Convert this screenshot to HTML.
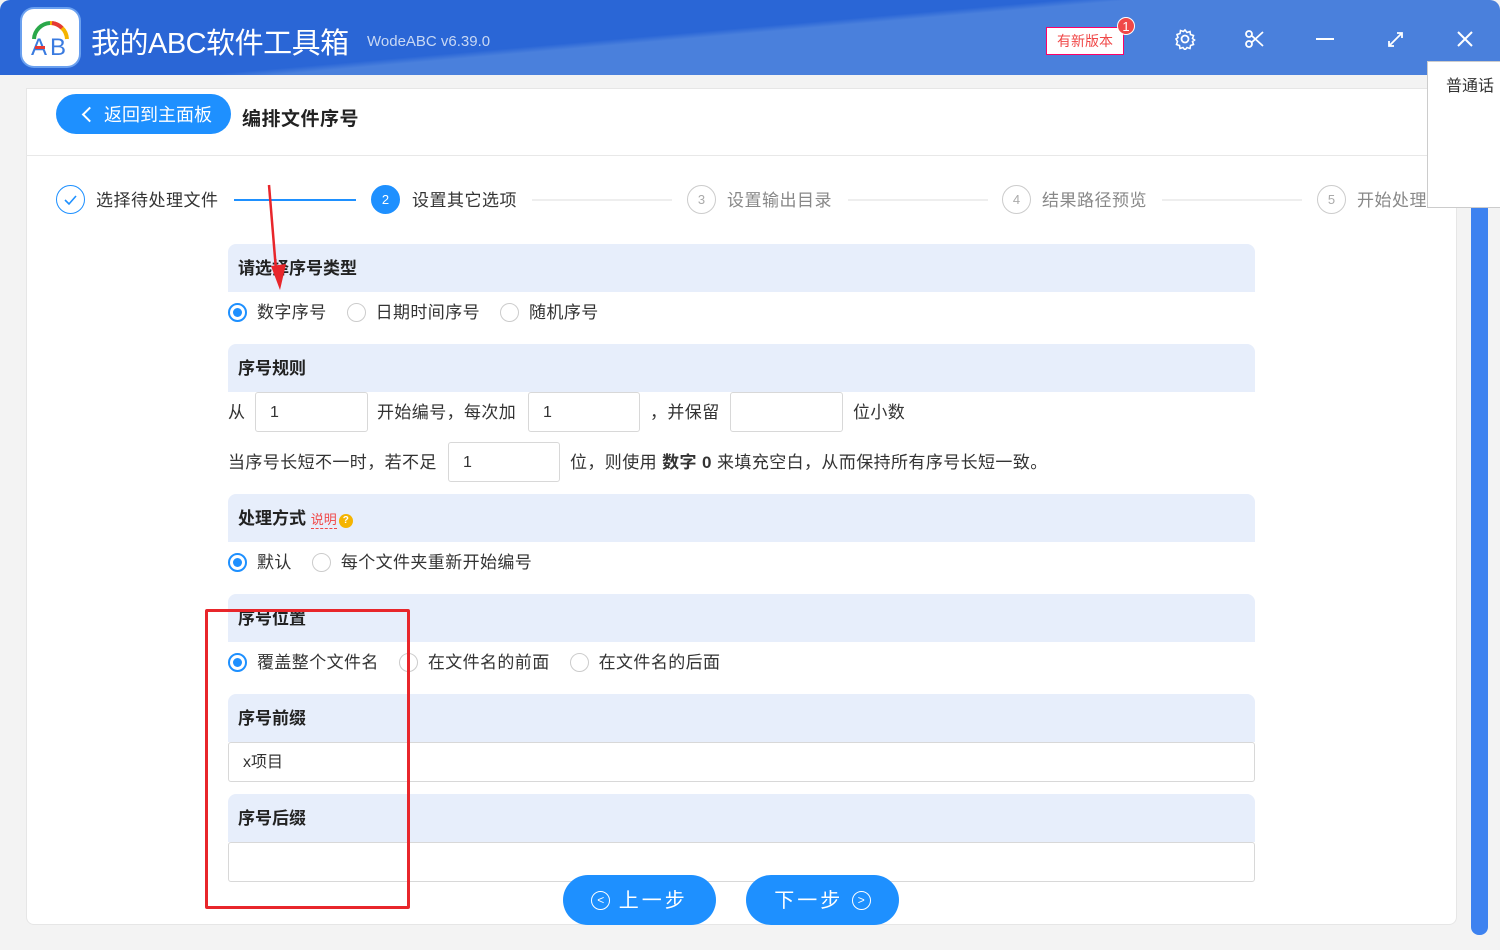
<!DOCTYPE html>
<html><head><meta charset="utf-8"><style>
*{box-sizing:border-box;margin:0;padding:0}
body{width:1500px;height:950px;overflow:hidden;background:#f3f3f3;font-family:"Liberation Sans","Noto Sans CJK SC",sans-serif;position:relative;color:#333}
.title{position:absolute;left:0;top:0;width:1500px;height:75px;background:linear-gradient(175deg,#2a66d6 0%,#2a66d6 45%,#4a80dc 48%,#4a80dc 100%);border-radius:10px 10px 0 0}
.logo{position:absolute;left:22px;top:9px;width:57px;height:57px;border-radius:12px;background:#fff;box-shadow:0 0 0 2px #6aa0ef}
.t1{position:absolute;left:91px;top:20px;color:#fff;font-size:29px;letter-spacing:-0.5px}
.t2{position:absolute;left:367px;top:33px;color:#c8d8f4;font-size:15px}
.nv{position:absolute;left:1046px;top:27px;width:78px;height:28px;border:1px solid #f06;background:#fff;color:#f04848;font-size:14px;text-align:center;line-height:26px}
.badge{position:absolute;left:1117px;top:17px;width:18px;height:18px;border-radius:50%;background:#f04848;color:#fff;font-size:13px;text-align:center;line-height:18px;border:1px solid #fff}
.panel{position:absolute;left:26px;top:88px;width:1431px;height:837px;background:#fff;border:1px solid #e6e6e6;border-radius:0 0 8px 8px}
.back{position:absolute;left:56px;top:94px;width:175px;height:40px;border-radius:20px;background:#1e90ff;color:#fff;font-size:18px;line-height:42px;padding-left:48px}
.back:before{content:"";position:absolute;left:28px;top:15px;width:9px;height:9px;border-left:2px solid #fff;border-bottom:2px solid #fff;transform:rotate(45deg)}
.h1{position:absolute;left:242px;top:104px;font-size:19px;font-weight:bold;color:#222;letter-spacing:0.5px}
.div{position:absolute;left:26px;top:155px;width:1431px;height:1px;background:#e8e8e8}
.step{position:absolute;top:186px;font-size:17px;color:#888;line-height:29px;letter-spacing:0.5px}
.c{position:absolute;top:185px;width:29px;height:29px;border-radius:50%;border:1px solid #ccc;color:#aaa;font-size:13px;text-align:center;line-height:27px}
.ln{position:absolute;top:199px;height:2px;background:#eee}
.sec{position:absolute;left:228px;width:1027px;height:48px;background:#e7eefb;border-radius:8px 8px 0 0;font-weight:bold;font-size:17px;line-height:50px;padding-left:10px;color:#222}
.row{position:absolute;left:228px;font-size:17px;color:#333;line-height:42px;letter-spacing:0.4px}
.r{display:inline-block;width:19px;height:19px;border-radius:50%;border:1px solid #ccc;vertical-align:-4px;margin-right:10px;position:relative}
.r.on{border:2px solid #1e90ff}
.r.on:after{content:"";position:absolute;left:3px;top:3px;width:9px;height:9px;border-radius:50%;background:#1e90ff}
.inp{position:absolute;height:40px;border:1px solid #d8d8d8;border-radius:3px;font-size:16px;line-height:40px;padding-left:14px;background:#fff}
.btn{position:absolute;top:875px;width:153px;height:50px;border-radius:25px;background:#1e90ff;color:#fff;font-size:20px;text-align:center;line-height:52px;letter-spacing:3px}
.cc{display:inline-block;width:19px;height:19px;border:1.5px solid #fff;border-radius:50%;font-size:12px;line-height:16px;vertical-align:3px;letter-spacing:0}
</style></head><body>
<div class="title"></div>
<div class="logo"><svg width="57" height="57" viewBox="0 0 57 57"><path d="M12 30 A17 17 0 0 1 28 14" stroke="#2aa84a" stroke-width="4" fill="none"/><path d="M28 14 A17 17 0 0 1 45 30" stroke="#f5b400" stroke-width="4" fill="none"/><path d="M30 14 A17 17 0 0 1 40 19" stroke="#e53935" stroke-width="4" fill="none"/><text x="9" y="46" font-size="24" font-family="Liberation Sans" fill="#3a7be0">A</text><text x="28" y="46" font-size="24" font-family="Liberation Sans" fill="#3a7be0">B</text><rect x="13" y="37" width="10" height="3" fill="#e53935"/></svg></div>
<div class="t1">我的ABC软件工具箱</div>
<div class="t2">WodeABC v6.39.0</div>
<div class="nv">有新版本</div><div class="badge">1</div>
<svg style="position:absolute;left:1174px;top:28px" width="22" height="22" viewBox="0 0 22 22"><circle cx="11" cy="11" r="3.5" stroke="#fff" stroke-width="1.8" fill="none"/><path d="M11 2l2 2.5 3-1 .5 3 3 1-1 3 2 1.5-2 1.5 1 3-3 1-.5 3-3-1-2 2.5-2-2.5-3 1-.5-3-3-1 1-3L2 11l2-1.5-1-3 3-1 .5-3 3 1z" stroke="#fff" stroke-width="1.6" fill="none"/></svg>
<svg style="position:absolute;left:1245px;top:30px" width="19" height="18" viewBox="0 0 19 18"><circle cx="4" cy="4" r="3" stroke="#fff" stroke-width="1.8" fill="none"/><circle cx="4" cy="14" r="3" stroke="#fff" stroke-width="1.8" fill="none"/><path d="M6.5 5.5L18 16M6.5 12.5L18 2" stroke="#fff" stroke-width="1.8"/></svg>
<div style="position:absolute;left:1316px;top:38px;width:18px;height:2px;background:#fff"></div>
<svg style="position:absolute;left:1387px;top:31px" width="17" height="17" viewBox="0 0 17 17"><path d="M2 15L15 2M10 2h5v5M2 10v5h5" stroke="#fff" stroke-width="1.8" fill="none"/></svg>
<svg style="position:absolute;left:1457px;top:31px" width="16" height="16" viewBox="0 0 16 16"><path d="M1 1L15 15M15 1L1 15" stroke="#fff" stroke-width="2"/></svg>
<div class="panel"></div>
<div style="position:absolute;left:1471px;top:207px;width:17px;height:728px;background:#3d82f0;border-radius:0 0 8px 8px"></div>
<div class="back">返回到主面板</div>
<div class="h1">编排文件序号</div>
<div class="div"></div>
<div class="c" style="left:56px;border-color:#1e90ff"><svg width="27" height="27" viewBox="0 0 27 27"><path d="M8 14l4 4 7-8" stroke="#1e90ff" stroke-width="1.6" fill="none"/></svg></div>
<div class="step" style="left:96px;color:#333">选择待处理文件</div>
<div class="ln" style="left:234px;width:122px;background:#1e90ff"></div>
<div class="c" style="left:371px;background:#1e90ff;border-color:#1e90ff;color:#fff">2</div>
<div class="step" style="left:412px;color:#333">设置其它选项</div>
<div class="ln" style="left:532px;width:140px"></div>
<div class="c" style="left:687px">3</div><div class="step" style="left:727px">设置输出目录</div>
<div class="ln" style="left:848px;width:140px"></div>
<div class="c" style="left:1002px">4</div><div class="step" style="left:1042px">结果路径预览</div>
<div class="ln" style="left:1162px;width:140px"></div>
<div class="c" style="left:1317px">5</div><div class="step" style="left:1357px">开始处理</div>
<div style="position:absolute;left:1427px;top:61px;width:80px;height:147px;background:#fff;border:1px solid #ccc;font-size:16px;padding:10px 0 0 18px;color:#333">普通话</div>

<div class="sec" style="top:244px">请选择序号类型</div>
<div class="row" style="top:292px"><span class="r on"></span>数字序号<span style="display:inline-block;width:20px"></span><span class="r"></span>日期时间序号<span style="display:inline-block;width:20px"></span><span class="r"></span>随机序号</div>
<div class="sec" style="top:344px">序号规则</div>
<div class="row" style="top:392px">从</div><div class="inp" style="left:255px;top:392px;width:113px">1</div>
<div class="row" style="top:392px;left:377px">开始编号，每次加</div><div class="inp" style="left:528px;top:392px;width:112px">1</div>
<div class="row" style="top:392px;left:650px">，并保留</div><div class="inp" style="left:730px;top:392px;width:113px"></div>
<div class="row" style="top:392px;left:853px">位小数</div>
<div class="row" style="top:442px">当序号长短不一时，若不足</div><div class="inp" style="left:448px;top:442px;width:112px">1</div>
<div class="row" style="top:442px;left:570px">位，则使用 <b>数字 0</b> 来填充空白，从而保持所有序号长短一致。</div>
<div class="sec" style="top:494px">处理方式 <span style="color:#f04848;font-weight:normal;font-size:13px;border-bottom:1px dashed #f04848;line-height:16px;display:inline-block">说明</span><span style="display:inline-block;width:14px;height:14px;border-radius:50%;background:#f5b400;color:#fff;font-size:10px;line-height:14px;text-align:center;vertical-align:1px;margin-left:2px">?</span></div>
<div class="row" style="top:542px"><span class="r on"></span>默认<span style="display:inline-block;width:20px"></span><span class="r"></span>每个文件夹重新开始编号</div>
<div class="sec" style="top:594px">序号位置</div>
<div class="row" style="top:642px"><span class="r on"></span>覆盖整个文件名<span style="display:inline-block;width:20px"></span><span class="r"></span>在文件名的前面<span style="display:inline-block;width:20px"></span><span class="r"></span>在文件名的后面</div>
<div class="sec" style="top:694px">序号前缀</div>
<div class="inp" style="left:228px;top:742px;width:1027px">x项目</div>
<div class="sec" style="top:794px">序号后缀</div>
<div class="inp" style="left:228px;top:842px;width:1027px"></div>
<div class="btn" style="left:563px"><span class="cc">&lt;</span> 上一步</div>
<div class="btn" style="left:746px">下一步 <span class="cc">&gt;</span></div>
<div style="position:absolute;left:205px;top:609px;width:205px;height:300px;border:3px solid #e8262b;border-radius:2px"></div>
<svg style="position:absolute;left:0;top:0" width="1500" height="950"><path d="M269 185L276 270" stroke="#e8262b" stroke-width="2.5"/><path d="M271 266L280 290L286 264Z" fill="#e8262b"/></svg>
</body></html>
